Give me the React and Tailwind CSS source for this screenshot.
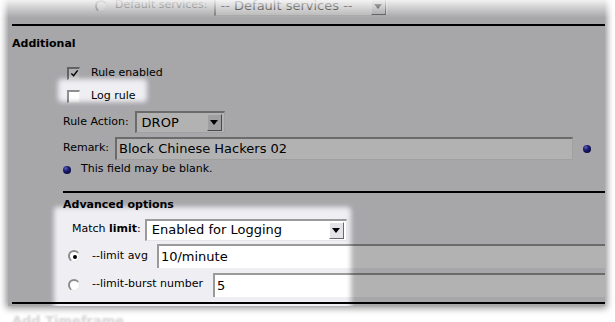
const font = { fontFamily: '"DejaVu Sans", Verdana, sans-serif' };

const Dot = ({ className = '' }) => (
  <span
    className={`inline-block w-[8px] h-[8px] rounded-full shrink-0 bg-[radial-gradient(circle_at_35%_30%,#8a8aff_0%,#2a2aa8_35%,#0b0b55_80%)] ${className}`}
  />
);

const Checkbox = ({ checked }) => (
  <span className="relative inline-block w-[13px] h-[13px] bg-white border-t-2 border-l-2 border-[#8e8e8e] border-b border-r border-b-[#f4f4f4] border-r-[#f4f4f4] shrink-0">
    {checked && (
      <svg viewBox="0 0 10 10" className="absolute left-[1px] top-[0px] w-[9px] h-[9px]">
        <path d="M1.5 5 L4 7.5 L8.5 1.5" fill="none" stroke="#000" strokeWidth="1.6" />
      </svg>
    )}
  </span>
);

const Radio = ({ checked }) => (
  <span className="relative inline-flex items-center justify-center w-[12px] h-[12px] rounded-full bg-white border-t-2 border-l-2 border-[#8a8a8a] border-b border-r border-b-[#e8e8e8] border-r-[#e8e8e8] shrink-0">
    {checked && <span className="w-[4px] h-[4px] rounded-full bg-black" />}
  </span>
);

const Select = ({ value, className = '', textClass = 'text-[13px]' }) => (
  <div className={`flex items-center bg-white border-t-2 border-l-2 border-[#9a9a9a] border-b border-r border-b-[#e6e6e6] border-r-[#e6e6e6] ${className}`}>
    <span className={`flex-1 pl-[5px] text-black ${textClass}`}>{value}</span>
    <span className="flex items-center justify-center w-[15px] h-[17px] mr-[2px] bg-[#e4e4e8] border border-t-white border-l-white border-b-[#6a6a6a] border-r-[#6a6a6a]">
      <svg viewBox="0 0 8 5" className="w-[8px] h-[5px]">
        <path d="M0 0 H8 L4 5 Z" fill="#000" />
      </svg>
    </span>
  </div>
);

const Input = ({ value, className = '' }) => (
  <div className={`flex items-center bg-white border-t-2 border-l-2 border-[#9a9a9a] ${className}`}>
    <span className="pl-[2px] text-[13px] text-black">{value}</span>
  </div>
);

export default function App() {
  return (
    <div className="relative w-[615px] h-[322px] bg-white overflow-hidden" style={font}>
      <div className="relative ml-[8px] w-[597px] h-[311px] bg-[#efeef3] shadow-[0_0_7px_2px_rgba(0,0,0,0.45)] text-[11px] text-black">
        {/* top row, cut off */}
        <div className="flex items-center h-[21px] -mt-[5px] pl-[87px]">
          <Radio />
          <span className="ml-[8px] text-[#555]">Default services:</span>
          <Select value="-- Default services --" className="ml-[6px] w-[175px] h-[21px]" textClass="text-[13px] text-[#555]" />
        </div>

        <div className="mt-[8px] ml-[4px] h-[2px] bg-black" />

        <div className="flex items-center h-[36px] pl-[4px] font-bold">Additional</div>

        <div className="flex items-center h-[22px] pl-[59px]">
          <Checkbox checked />
          <span className="ml-[11px]">Rule enabled</span>
        </div>

        <div className="flex items-center h-[25px] pl-[59px]">
          <Checkbox />
          <span className="ml-[11px]">Log rule</span>
        </div>

        <div className="flex items-center h-[26px] pl-[55px]">
          <span>Rule Action:</span>
          <Select value="DROP" className="ml-[6px] w-[90px] h-[22px]" />
        </div>

        <div className="flex items-center h-[27px] pl-[55px]">
          <span>Remark:</span>
          <Input value="Block Chinese Hackers 02" className="ml-[6px] w-[458px] h-[23px] border-b border-r border-b-[#e6e6e6] border-r-[#e6e6e6]" />
          <Dot className="ml-[10px]" />
        </div>

        <div className="flex items-center h-[15px] pl-[55px]">
          <Dot />
          <span className="ml-[10px]">This field may be blank.</span>
        </div>

        <div className="mt-[14px] ml-[55px] h-[2px] bg-black" />

        <div className="flex items-center h-[24px] pl-[55px] font-bold">Advanced options</div>

        <div className="flex items-center h-[25px] pl-[64px]">
          <span>
            Match <b>limit</b>:
          </span>
          <Select value="Enabled for Logging" className="ml-[4px] w-[202px] h-[22px]" />
        </div>

        <div className="flex items-center h-[28px] pl-[60px]">
          <Radio checked />
          <span className="ml-[12px]">--limit avg</span>
          <Input value="10/minute" className="ml-[9px] flex-1 h-[24px]" />
        </div>

        <div className="flex items-center h-[29px] pl-[60px]">
          <Radio />
          <span className="ml-[12px]">--limit-burst number</span>
          <Input value="5" className="ml-[10px] flex-1 h-[24px]" />
        </div>

        <div className="mt-[3px] ml-[4px] h-[2px] bg-black" />

        {/* spotlight overlay */}
        <svg className="absolute inset-0 pointer-events-none" width="597" height="311" viewBox="0 0 597 311">
          <defs>
            <filter id="soft" x="-20%" y="-20%" width="140%" height="140%">
              <feGaussianBlur stdDeviation="2.5" />
            </filter>
            <mask id="spot">
              <rect width="597" height="311" fill="white" />
              <g filter="url(#soft)">
                <rect x="50" y="84" width="89" height="23" rx="4" fill="black" />
                <rect x="46" y="212" width="297" height="115" rx="4" fill="black" />
              </g>
            </mask>
          </defs>
          <rect width="597" height="311" fill="black" fillOpacity="0.3" mask="url(#spot)" />
        </svg>
      </div>

      {/* faded top edge */}
      <div className="absolute left-0 top-0 w-[615px] h-[18px] bg-gradient-to-b from-white/85 via-white/40 to-transparent" />

      <div className="absolute left-[12px] top-[311px] text-[13px] font-bold text-[#d4d4d8] blur-[1px]">Add Timeframe</div>
    </div>
  );
}
